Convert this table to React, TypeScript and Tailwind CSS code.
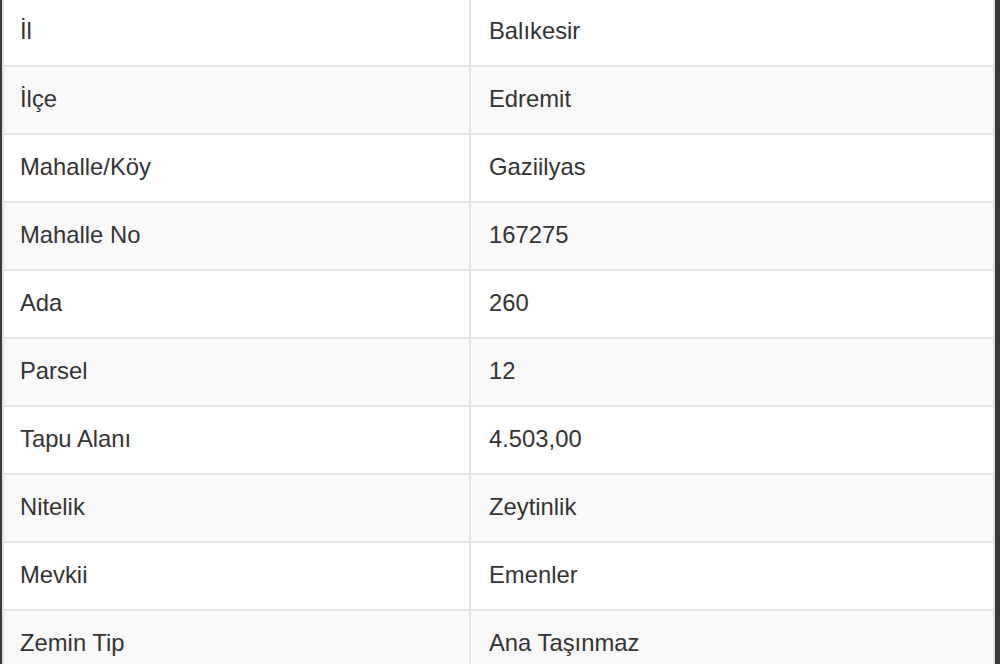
import React from 'react';

const rows: [string, string][] = [
  ['İl', 'Balıkesir'],
  ['İlçe', 'Edremit'],
  ['Mahalle/Köy', 'Gaziilyas'],
  ['Mahalle No', '167275'],
  ['Ada', '260'],
  ['Parsel', '12'],
  ['Tapu Alanı', '4.503,00'],
  ['Nitelik', 'Zeytinlik'],
  ['Mevkii', 'Emenler'],
  ['Zemin Tip', 'Ana Taşınmaz'],
];

export default function App() {
  return (
    <div className="flex h-[664px] w-[1000px] overflow-hidden bg-white text-[#333] font-['Liberation_Sans',Arial,sans-serif]">
      <div className="w-[2px] shrink-0 bg-[#3d3a36]" />
      <div className="flex-1 overflow-hidden border-l-2 border-r-2 border-[#e2e2e2]">
        {rows.map(([label, value], i) => (
          <div
            key={label}
            className={`flex ${i === 0 ? 'h-[65px] pb-[3px]' : 'h-[68px] border-t-2 border-[#e2e2e2] pb-[2px]'} ${i % 2 === 1 ? 'bg-[#f9f9f9]' : 'bg-white'}`}
          >
            <div className="flex w-[465px] shrink-0 items-center pl-[16px] text-[23.8px]">{label}</div>
            <div className="-mb-[3px] flex flex-1 items-center border-l-2 border-[#e2e2e2] pb-[3px] pl-[18px] text-[23.8px]">{value}</div>
          </div>
        ))}
      </div>
      <div className="w-[5px] shrink-0 bg-[#3a3833]" />
    </div>
  );
}
